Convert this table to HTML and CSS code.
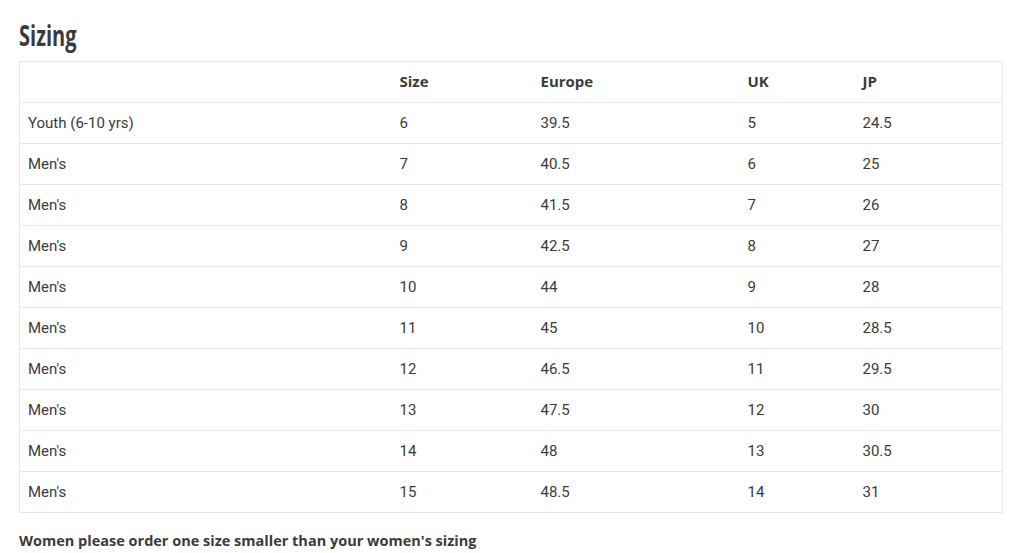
FILE: index.html
```html
<!DOCTYPE html>
<html>
<head>
<meta charset="utf-8">
<link rel="stylesheet" href="styles.css">
</head>
<body>
<div class="page">
  <h2 class="title">Sizing</h2>
  <table class="sizes">
    <colgroup>
      <col class="c1"><col class="c2"><col class="c3"><col class="c4"><col class="c5">
    </colgroup>
    <thead>
      <tr><th></th><th>Size</th><th>Europe</th><th>UK</th><th>JP</th></tr>
    </thead>
    <tbody>
      <tr><td>Youth (6-10 yrs)</td><td>6</td><td>39.5</td><td>5</td><td>24.5</td></tr>
      <tr><td>Men's</td><td>7</td><td>40.5</td><td>6</td><td>25</td></tr>
      <tr><td>Men's</td><td>8</td><td>41.5</td><td>7</td><td>26</td></tr>
      <tr><td>Men's</td><td>9</td><td>42.5</td><td>8</td><td>27</td></tr>
      <tr><td>Men's</td><td>10</td><td>44</td><td>9</td><td>28</td></tr>
      <tr><td>Men's</td><td>11</td><td>45</td><td>10</td><td>28.5</td></tr>
      <tr><td>Men's</td><td>12</td><td>46.5</td><td>11</td><td>29.5</td></tr>
      <tr><td>Men's</td><td>13</td><td>47.5</td><td>12</td><td>30</td></tr>
      <tr><td>Men's</td><td>14</td><td>48</td><td>13</td><td>30.5</td></tr>
      <tr><td>Men's</td><td>15</td><td>48.5</td><td>14</td><td>31</td></tr>
    </tbody>
  </table>
  <p class="note">Women please order one size smaller than your women's sizing</p>
</div>
</body>
</html>
```
FILE: styles.css
```css
html, body { margin: 0; padding: 0; background: #fff; }
body { font-family: Roboto, "Liberation Sans", sans-serif; color: #3b3b3b; }
.page { padding: 17px 19px 0 19px; }
.title {
  margin: 0 0 8px 0;
  font-family: "Open Sans", "Liberation Sans", sans-serif;
  font-weight: 700;
  font-size: 29px;
  line-height: 36px;
  color: #3a3a3a;
  transform: scaleX(0.69);
  transform-origin: left center;
}
.sizes {
  width: 983px;
  border-collapse: collapse;
  table-layout: fixed;
  font-size: 15px;
}
.c1 { width: 372px; }
.c2 { width: 141px; }
.c3 { width: 207px; }
.c4 { width: 115px; }
.c5 { width: 148px; }
.sizes th, .sizes td {
  border-top: 1px solid #e8e8e8;
  border-bottom: 1px solid #e8e8e8;
  padding: 11px 8px;
  line-height: 18px;
  height: 18px;
  text-align: left;
  vertical-align: middle;
}
.sizes th {
  font-family: "Open Sans", Roboto, sans-serif;
  font-weight: 700;
  padding: 10px 8px 12px 8px;
}
.sizes tr > :first-child { border-left: 1px solid #e8e8e8; }
.sizes tr > :last-child { border-right: 1px solid #e8e8e8; }
.note {
  margin: 19px 0 0 0;
  font-family: "Open Sans", Roboto, sans-serif;
  font-size: 14.5px;
  font-weight: 700;
  line-height: 18px;
}
```
